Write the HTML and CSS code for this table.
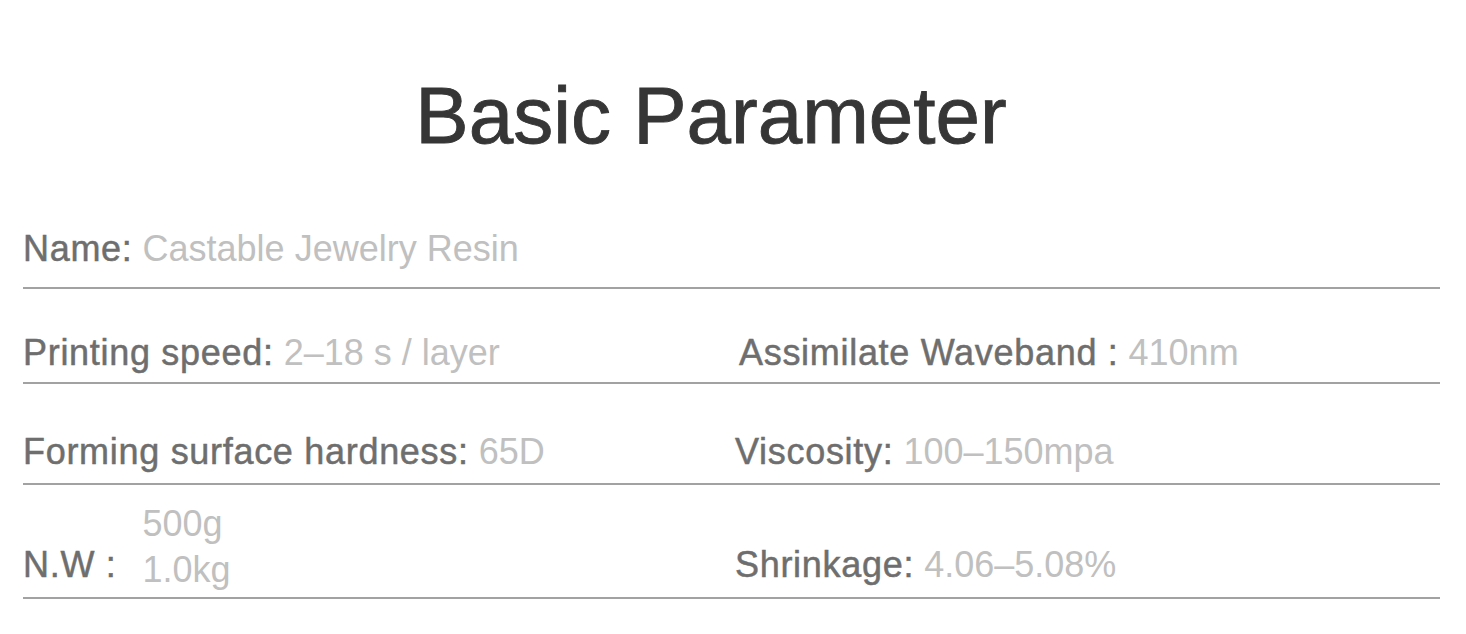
FILE: index.html
```html
<!DOCTYPE html>
<html lang="en">
<head>
<meta charset="utf-8">
<title>Basic Parameter</title>
<link rel="stylesheet" href="styles.css">
</head>
<body>
<h1 class="title">Basic Parameter</h1>
<div class="params">
  <div class="row row-1">
    <div class="cell"><span class="label">Name:</span> <span class="value">Castable Jewelry Resin</span></div>
  </div>
  <div class="row row-2">
    <div class="cell"><span class="label">Printing speed:</span> <span class="value">2–18 s / layer</span></div>
    <div class="cell cell-shift"><span class="label">Assimilate Waveband :</span> <span class="value">410nm</span></div>
  </div>
  <div class="row row-3">
    <div class="cell"><span class="label">Forming surface hardness:</span> <span class="value">65D</span></div>
    <div class="cell"><span class="label">Viscosity:</span> <span class="value">100–150mpa</span></div>
  </div>
  <div class="row row-4">
    <div class="cell cell-stack"><span class="label">N.W :</span><span class="value-stack"><span class="value">500g</span><span class="value">1.0kg</span></span></div>
    <div class="cell cell-bottom"><span class="label">Shrinkage:</span> <span class="value">4.06–5.08%</span></div>
  </div>
</div>
</body>
</html>
```

FILE: styles.css
```css
html, body {
  margin: 0;
  padding: 0;
  background: #ffffff;
}

body {
  font-family: "Liberation Sans", Arial, sans-serif;
}

.title {
  margin: 76px 0 0 0;
  padding-right: 44px;
  text-align: center;
  font-size: 80px;
  line-height: 80px;
  font-weight: normal;
  color: #363636;
  -webkit-text-stroke: 0.9px #363636;
}

.params {
  margin: 0 26px 0 23px;
}

.row {
  display: grid;
  grid-template-columns: 712px 1fr;
  border-bottom: 2px solid #a2a2a2;
  font-size: 36px;
  line-height: 40px;
}

.row-1 { padding: 73px 0 18px; }
.row-2 { padding: 44px 0 9px; }
.row-3 { padding: 48px 0 11px; }
.row-4 { padding: 16px 0 4px; }

.cell {
  white-space: nowrap;
}

.cell-shift {
  padding-left: 4px;
}

.cell-stack {
  display: flex;
  align-items: flex-end;
  gap: 26px;
}

.cell-bottom {
  align-self: end;
  margin-bottom: 8px;
}

.label {
  color: #6e6e6e;
  letter-spacing: 0.7px;
  -webkit-text-stroke: 0.5px #6e6e6e;
}

.cell-stack .label {
  margin-bottom: 8px;
}

.value {
  color: #c0c0c0;
}

.value-stack {
  display: flex;
  flex-direction: column;
  line-height: 46px;
}
```
